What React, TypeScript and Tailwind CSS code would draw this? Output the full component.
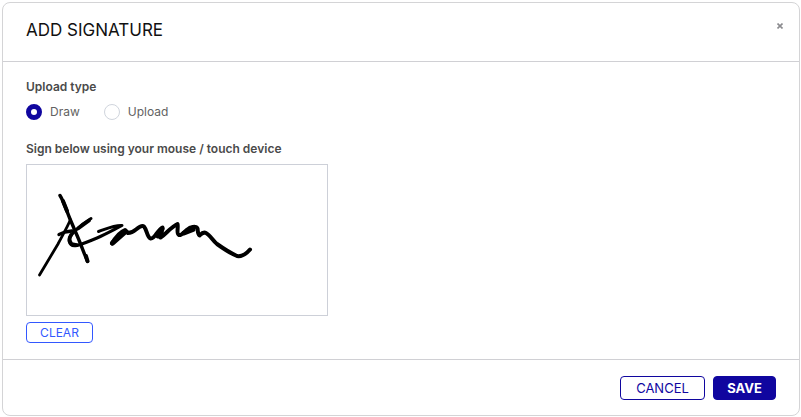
import { useState } from "react"

const uploadTypes = ["Draw", "Upload"]

function Signature() {
  return (
    <svg
      viewBox="27 165 300 150"
      className="block h-[150px] w-[300px]"
      fill="none"
      stroke="#000"
      strokeWidth="3.4"
      strokeLinecap="round"
      strokeLinejoin="round"
      role="img"
      aria-label="Signature"
    >
      <path d="M60 195.500C63 200 66 209 70 219L76 233C80 242 84 253 87.500 261.500" />
      <path d="M63 201L67 211M86 256L87.500 261" strokeWidth="4" />
      <path d="M70.500 219.500C67 228 62 236 58 244L39.500 275" strokeWidth="2.800" />
      <path d="M59 234.500L65 232L72 231" strokeWidth="3.400" />
      <path d="M91 218.500C85 222 80 226 76 230C72 234 68.500 237 69 241C70 245 73 246.500 77 245.500C84 243.500 90 241 97 238C106 234 114 229.500 122 225.500C114 225 106 229 98.500 231.500" strokeWidth="3" />
      <path d="M89 220.500L78 228.500M71 235C69 238 69 241 71.500 244L77 245" strokeWidth="3.800" />
      <path d="M112 243.500C115 238 120 232 125 230L128 233C131 233 133 232 136 229.500C139 227 142 225 144 226.500C147 230 147 237 150.500 238.500C155 239.500 157 230 162.500 227.500L160.500 237.500C166 234 171 227 177.500 224C178.500 228 176 234 179 235C182 236 186 229 191 227.500C194 226.500 197 226.500 197.500 228.500C198 231 197.500 234 199.500 235.500C201 234 203 231.500 206 233C210 235 213 241 217 244C224 249 230 253 237 256C243 257 247 253 250 249.500" strokeWidth="4" />
      <path d="M112.500 243L125 232M158 236L162 229M184 233L193 229.500" strokeWidth="5" />
    </svg>
  )
}

export default function App() {
  const [uploadType, setUploadType] = useState("Draw")

  return (
    <div className="bg-white pt-[2px] pl-[2px] pr-px font-['Inter',sans-serif]">
      <section className="rounded-lg border border-[#d4d4d6]" role="dialog" aria-labelledby="signature-title">
        <header className="flex items-start justify-between border-b border-[#d0d0d4] pt-[14px] pb-[18px] pl-[23px] pr-[10px]">
          <h2 id="signature-title" className="text-[17px] leading-[26px] text-[#111]">
            ADD SIGNATURE
          </h2>
          <button type="button" aria-label="Close" className="flex size-[18px] items-center justify-center text-[#8b8b8f]">
            <svg viewBox="0 0 6 6" className="size-[6px]" stroke="currentColor" strokeWidth="1.600">
              <path d="M0.500 0.500L5.500 5.500M5.500 0.500L0.500 5.500" />
            </svg>
          </button>
        </header>

        <div className="px-[23px] py-4">
          <fieldset>
            <legend className="text-xs font-semibold leading-[18px] text-[#4a4a4a]">Upload type</legend>
            <div className="flex gap-6 pt-2">
              {uploadTypes.map((type) => (
                <label key={type} className="flex items-center gap-2 text-xs leading-4 text-[#626262]">
                  <input
                    type="radio"
                    name="upload-type"
                    value={type}
                    checked={uploadType === type}
                    onChange={() => setUploadType(type)}
                    className="size-4 appearance-none rounded-full border border-[#d0d5dd] bg-white checked:border-[5px] checked:border-[#10069f]"
                  />
                  {type}
                </label>
              ))}
            </div>
          </fieldset>

          <p className="pt-5 text-xs font-semibold leading-[18px] text-[#4a4a4a]">
            Sign below using your mouse / touch device
          </p>
          <div className="mt-[6px] w-fit border border-[#cdd0d8]">
            <Signature />
          </div>
          <button
            type="button"
            className="mt-[6px] block min-w-[67px] rounded border border-[#3358ff] px-3 text-xs leading-[19px] text-[#3358ff]"
          >
            CLEAR
          </button>
        </div>

        <footer className="flex justify-end gap-2 border-t border-[#d0d0d4] px-[23px] pt-4 pb-[15px]">
          <button
            type="button"
            className="min-w-[85px] rounded border border-[#10069f] px-3 text-[13px] leading-[22px] text-[#10069f]"
          >
            CANCEL
          </button>
          <button
            type="button"
            className="min-w-[63px] rounded border border-[#10069f] bg-[#10069f] px-3 text-[13px] font-bold leading-[22px] text-white"
          >
            SAVE
          </button>
        </footer>
      </section>
    </div>
  )
}
